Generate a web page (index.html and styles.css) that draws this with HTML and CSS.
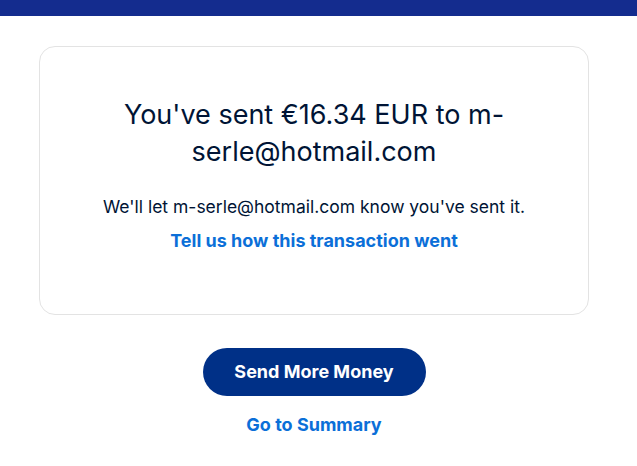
FILE: index.html
```html
<!DOCTYPE html>
<html lang="en">
<head>
<meta charset="utf-8">
<title>Money sent</title>
<link rel="stylesheet" href="styles.css">
</head>
<body>
<header class="topbar"></header>
<main class="main">
  <section class="card">
    <h1 class="title">You've sent €16.34 EUR to m-serle@hotmail.com</h1>
    <p class="note">We'll let m-serle@hotmail.com know you've sent it.</p>
    <a class="link" href="#">Tell us how this transaction went</a>
  </section>
  <div class="actions">
    <a class="btn" href="#">Send More Money</a>
    <a class="link" href="#">Go to Summary</a>
  </div>
</main>
</body>
</html>
```

FILE: styles.css
```css
html, body {
  margin: 0;
  padding: 0;
  background: #ffffff;
  font-family: Inter, "Liberation Sans", sans-serif;
  color: #001435;
}

.topbar {
  height: 16px;
  background: #142c8e;
}

.main {
  padding: 30px 48px 0 39px;
}

.card {
  box-sizing: border-box;
  width: 550px;
  border: 1px solid #e3e3e3;
  border-radius: 16px;
  padding: 49px 60px 61px;
  display: flex;
  flex-direction: column;
  align-items: center;
  text-align: center;
}

.title {
  margin: 0;
  max-width: 410px;
  font-size: 27px;
  line-height: 37px;
  font-weight: 400;
}

.note {
  margin: 25px 0 0;
  font-size: 17.5px;
  line-height: 24px;
}

.link {
  display: block;
  margin-top: 10px;
  font-size: 18px;
  line-height: 24px;
  font-weight: 700;
  color: #0b6fd8;
  text-decoration: none;
}

.actions {
  width: 550px;
  display: flex;
  flex-direction: column;
  align-items: center;
  padding-top: 33px;
}

.btn {
  box-sizing: border-box;
  width: 223px;
  height: 48px;
  border-radius: 24px;
  background: #003087;
  color: #ffffff;
  font-size: 18px;
  font-weight: 700;
  line-height: 48px;
  text-align: center;
  text-decoration: none;
}

.actions .link {
  margin-top: 17px;
}
```
